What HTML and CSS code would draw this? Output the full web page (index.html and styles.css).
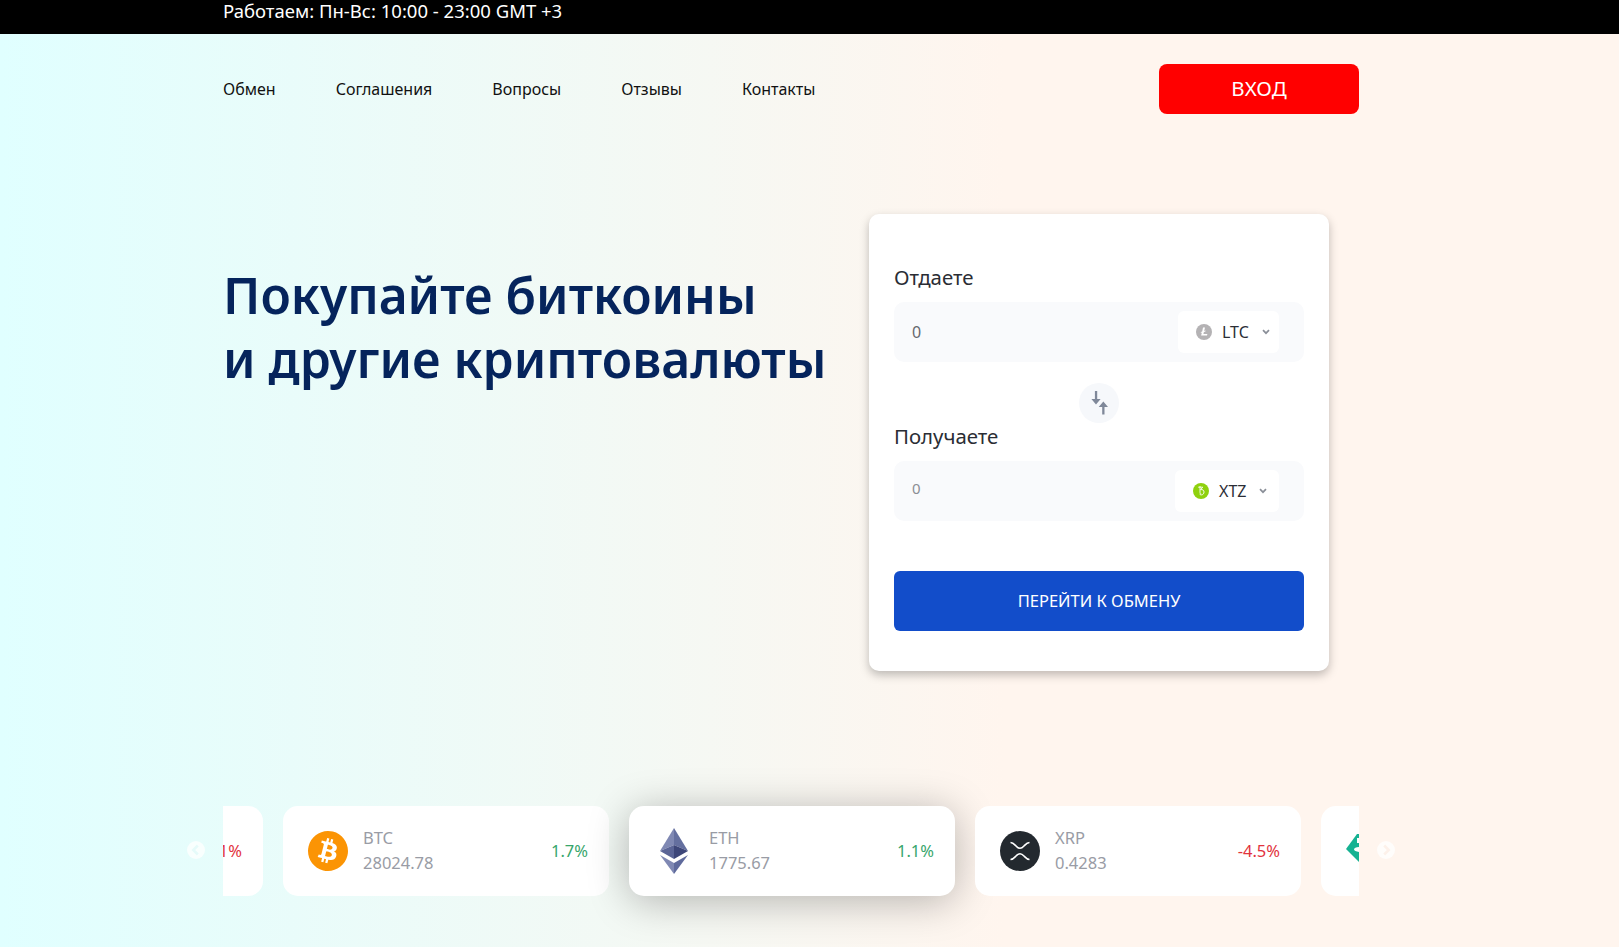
FILE: index.html
```html
<!DOCTYPE html>
<html lang="ru">
<head>
<meta charset="utf-8">
<title>Обмен криптовалют</title>
<link rel="stylesheet" href="styles.css">
</head>
<body>
<div class="topbar"><div class="container">Работаем: Пн-Вс: 10:00 - 23:00 GMT +3</div></div>
<div class="page">
  <header class="container header">
    <nav class="nav">
      <a>Обмен</a><a>Соглашения</a><a>Вопросы</a><a>Отзывы</a><a>Контакты</a>
    </nav>
    <button class="login">ВХОД</button>
  </header>
  <main class="container hero">
    <h1>Покупайте биткоины<br>и другие криптовалюты</h1>
    <form class="card">
      <div class="label">Отдаете</div>
      <div class="field">
        <span class="amount">0</span>
        <div class="select">
          <svg class="coin" viewBox="0 0 16 16"><circle cx="8" cy="8" r="8" fill="#b4b2b4"/><path d="M7 3.6h2L8.2 7l1.500-.5-.3 1.100-1.500.5-.5 1.900h4l-.4 1.600H5.100l.8-3-1.200.4.3-1 1.200-.4z" fill="#fff"/></svg>
          <span>LTC</span>
          <svg class="caret" viewBox="0 0 8 6"><path d="M1 1.200 4 4.200 7 1.200" fill="none" stroke="#8a8f98" stroke-width="1.700"/></svg>
        </div>
      </div>
      <div class="swap-row">
        <div class="swap">
          <svg viewBox="0 0 18 24"><path d="M4.900 0h2.300v8h3.400L6 13.400 1.400 8h3.500z" fill="#7f8899"/><path d="M12.200 23.500h2.300V16H18l-4.650-5.500L8.700 16h3.500z" fill="#7f8899"/></svg>
        </div>
      </div>
      <div class="label">Получаете</div>
      <div class="field">
        <span class="amount amount-muted">0</span>
        <div class="select select-wide">
          <svg class="coin" viewBox="0 0 16 16"><circle cx="8" cy="8" r="8" fill="#8fd10e"/><path d="M5.200 4.200h4.600L7.600 6.600c2.200-.3 3.400.8 3.400 2.400 0 1.700-1.200 2.900-2.700 2.900-1 0-1.600-.6-1.600-1.100M7 3v6.400c0 1 .5 1.500 1.200 1.500" fill="none" stroke="#fff" stroke-width=".9"/></svg>
          <span>XTZ</span>
          <svg class="caret" viewBox="0 0 8 6"><path d="M1 1.200 4 4.200 7 1.200" fill="none" stroke="#8a8f98" stroke-width="1.700"/></svg>
        </div>
      </div>
      <button class="submit" type="button">ПЕРЕЙТИ К ОБМЕНУ</button>
    </form>
  </main>
  <section class="container ticker">
    <span class="arrow arrow-prev"><svg viewBox="0 0 18 18"><path d="M10.800 4.500 6.300 9l4.500 4.500" fill="none" stroke="#e6fbfa" stroke-width="2.600"/></svg></span>
    <div class="viewport">
      <div class="track">
        <article class="coin-card">
          <svg class="coin-logo" viewBox="0 0 40 40"></svg>
          <div class="coin-text"></div>
          <span class="change down">-1.1%</span>
        </article>
        <article class="coin-card">
          <svg class="coin-logo" viewBox="0 0 24 24"><path fill="#fb9404" d="M23.638 14.904c-1.602 6.43-8.113 10.34-14.542 8.736C2.670 22.050-1.244 15.525.362 9.105 1.962 2.670 8.475-1.243 14.900.358c6.430 1.605 10.342 8.115 8.738 14.548v-.002zm-6.350-4.613c.240-1.590-.974-2.450-2.640-3.030l.540-2.153-1.315-.330-.525 2.107c-.345-.087-.705-.167-1.064-.250l.526-2.127-1.320-.330-.540 2.165c-.285-.067-.565-.132-.840-.200l-1.815-.450-.350 1.407s.975.225.955.236c.535.136.630.486.615.766l-1.477 5.920c-.075.166-.240.406-.614.314.015.020-.960-.240-.960-.240l-.660 1.510 1.710.426.930.242-.540 2.190 1.320.327.540-2.170c.360.100.705.190 1.050.273l-.510 2.154 1.320.330.545-2.190c2.240.427 3.930.257 4.640-1.774.570-1.637-.030-2.580-1.217-3.196.854-.193 1.500-.760 1.680-1.930h.010zm-3.010 4.220c-.404 1.640-3.157.750-4.050.530l.720-2.900c.896.230 3.757.670 3.330 2.370zm.410-4.240c-.370 1.490-2.662.735-3.405.550l.654-2.640c.744.180 3.137.524 2.750 2.084v.006z"/></svg>
          <div class="coin-text"><span>BTC</span><span>28024.78</span></div>
          <span class="change up">1.7%</span>
        </article>
        <article class="coin-card coin-card-active">
          <svg class="coin-logo" viewBox="0 0 40 46"><path fill="#7f88b3" d="M20 0 6 23l14-6z"/><path fill="#646f9f" d="M20 0l14 23-14-6z"/><path fill="#5a6496" d="M6 23l14-6v14z"/><path fill="#3d4679" d="M34 23l-14-6v14z"/><path fill="#7f88b3" d="M6 27l14 8v11z"/><path fill="#5f6a9c" d="M34 27l-14 8v11z"/></svg>
          <div class="coin-text"><span>ETH</span><span>1775.67</span></div>
          <span class="change up">1.1%</span>
        </article>
        <article class="coin-card">
          <svg class="coin-logo" viewBox="0 0 40 40"><circle cx="20" cy="20" r="20" fill="#23292f"/><path d="M10.500 11.500c2.500 0 3.600 1.500 5.500 3.500 2.800 3 5.200 3 8 0 1.900-2 3-3.500 5.500-3.500M10.500 28.500c2.500 0 3.600-1.500 5.500-3.500 2.800-3 5.200-3 8 0 1.900 2 3 3.500 5.500 3.500" fill="none" stroke="#fff" stroke-width="1.600"/></svg>
          <div class="coin-text"><span>XRP</span><span>0.4283</span></div>
          <span class="change down">-4.5%</span>
        </article>
        <article class="coin-card">
          <svg class="coin-logo" viewBox="0 0 40 40"><path fill="#16b292" d="M11 3h18l10 15-19 20L0 18z"/><path fill="#fff" d="M11 7h13v5h-4v4c4 0 8 1 8 2.500S24 21 20 21v9h-5v-9c-4 0-7-1-7-2.500S11 16 15 16v-4h-4z"/></svg>
        </article>
      </div>
    </div>
    <span class="arrow arrow-next"><svg viewBox="0 0 18 18"><path d="M7.200 4.500 11.700 9l-4.500 4.500" fill="none" stroke="#fdf1ea" stroke-width="2.600"/></svg></span>
  </section>
</div>
</body>
</html>
```
FILE: styles.css
```css
* { box-sizing: border-box; }
html, body { margin: 0; height: 100%; }
body {
  font-family: "Noto Sans", "Open Sans", Arial, sans-serif;
  color: #1b1f2a;
  overflow: hidden;
}
.container { width: 1136px; margin-left: 223px; }
.topbar {
  height: 34px;
  background: #000;
  color: #fff;
  font-size: 18.5px;
  line-height: 22px;
}
.page {
  height: 913px;
  background: linear-gradient(90deg, #e0ffff 0%, #fff5ee 62%, #fff5ee 100%);
}
.header {
  display: flex;
  justify-content: space-between;
  align-items: center;
  padding-top: 30px;
}
.nav { display: flex; gap: 60px; font-size: 16px; color: #111; }
.login {
  width: 200px;
  height: 50px;
  padding: 0 0 2px;
  border: 0;
  border-radius: 8px;
  background: #f00;
  color: #fff;
  font: 20.5px "Noto Sans", sans-serif;
}
.hero {
  display: flex;
  justify-content: space-between;
  padding: 100px 30px 0 0;
  height: 692px;
}
h1 {
  margin: 49px 0 0;
  font-size: 49.8px;
  line-height: 64px;
  font-weight: 600;
  color: #05245c;
}
.card {
  width: 460px;
  height: 457px;
  padding: 50px 25px 0;
  background: #fff;
  border-radius: 10px;
  box-shadow: 0 4px 10px rgba(0, 0, 0, .25);
}
.label { font-size: 20.4px; line-height: 26px; color: #2a2d34; margin-bottom: 12px; }
.field {
  height: 60px;
  padding: 9px 25px 0 18px;
  display: flex;
  justify-content: space-between;
  background: #f9fafc;
  border-radius: 10px;
}
.amount { font-size: 16px; line-height: 42px; color: #66686e; }
.amount-muted { color: #8c8e94; font-size: 15px; line-height: 36px; }
.select {
  width: 101px;
  height: 42px;
  display: flex;
  align-items: center;
  padding-left: 18px;
  background: #fff;
  border-radius: 6px;
  font-size: 16px;
  color: #2b2e36;
}
.select-wide { width: 104px; }
.coin { width: 16px; height: 16px; margin-right: 10px; }
.caret { width: 8px; height: 6px; margin-left: 13px; }
.swap-row { display: flex; justify-content: center; padding-top: 21px; }
.swap {
  width: 40px;
  height: 40px;
  border-radius: 50%;
  background: #f6f8fb;
  display: flex;
  align-items: center;
  justify-content: center;
}
.swap svg { width: 18px; height: 24px; }
.submit {
  display: block;
  width: 100%;
  height: 60px;
  margin-top: 50px;
  padding: 0 0 2px;
  border: 0;
  border-radius: 6px;
  background: #124dca;
  color: #fff;
  font: 16.5px "Noto Sans", sans-serif;
}
.ticker { position: relative; display: flow-root; }
.viewport { overflow: hidden; padding: 50px 0; margin-top: -50px; }
.track { display: flex; gap: 20px; margin-left: -286px; }
.coin-card {
  flex: 0 0 326px;
  height: 90px;
  padding: 0 21px 0 25px;
  display: flex;
  align-items: center;
  background: #fff;
  border-radius: 15px;
}
.coin-card-active { box-shadow: 0 5px 40px rgba(0, 0, 0, .28); }
.coin-logo { flex: 0 0 40px; height: 40px; margin-right: 15px; }
.coin-card-active .coin-logo { height: 46px; }
.coin-text {
  flex: 1;
  display: flex;
  flex-direction: column;
  gap: 3px;
  margin-top: -2px;
  font-size: 16.5px;
  line-height: 22px;
  color: #999ca5;
}
.change { font-size: 16.5px; margin-top: -1px; }
.up { color: #38a66c; }
.down { color: #e2333d; }
.arrow {
  position: absolute;
  top: 35px;
  width: 18px;
  height: 18px;
  border-radius: 50%;
  background: rgba(255, 255, 255, .75);
}
.arrow svg { display: block; width: 18px; height: 18px; }
.arrow-prev { left: -36px; }
.arrow-next { right: -36px; }
```
